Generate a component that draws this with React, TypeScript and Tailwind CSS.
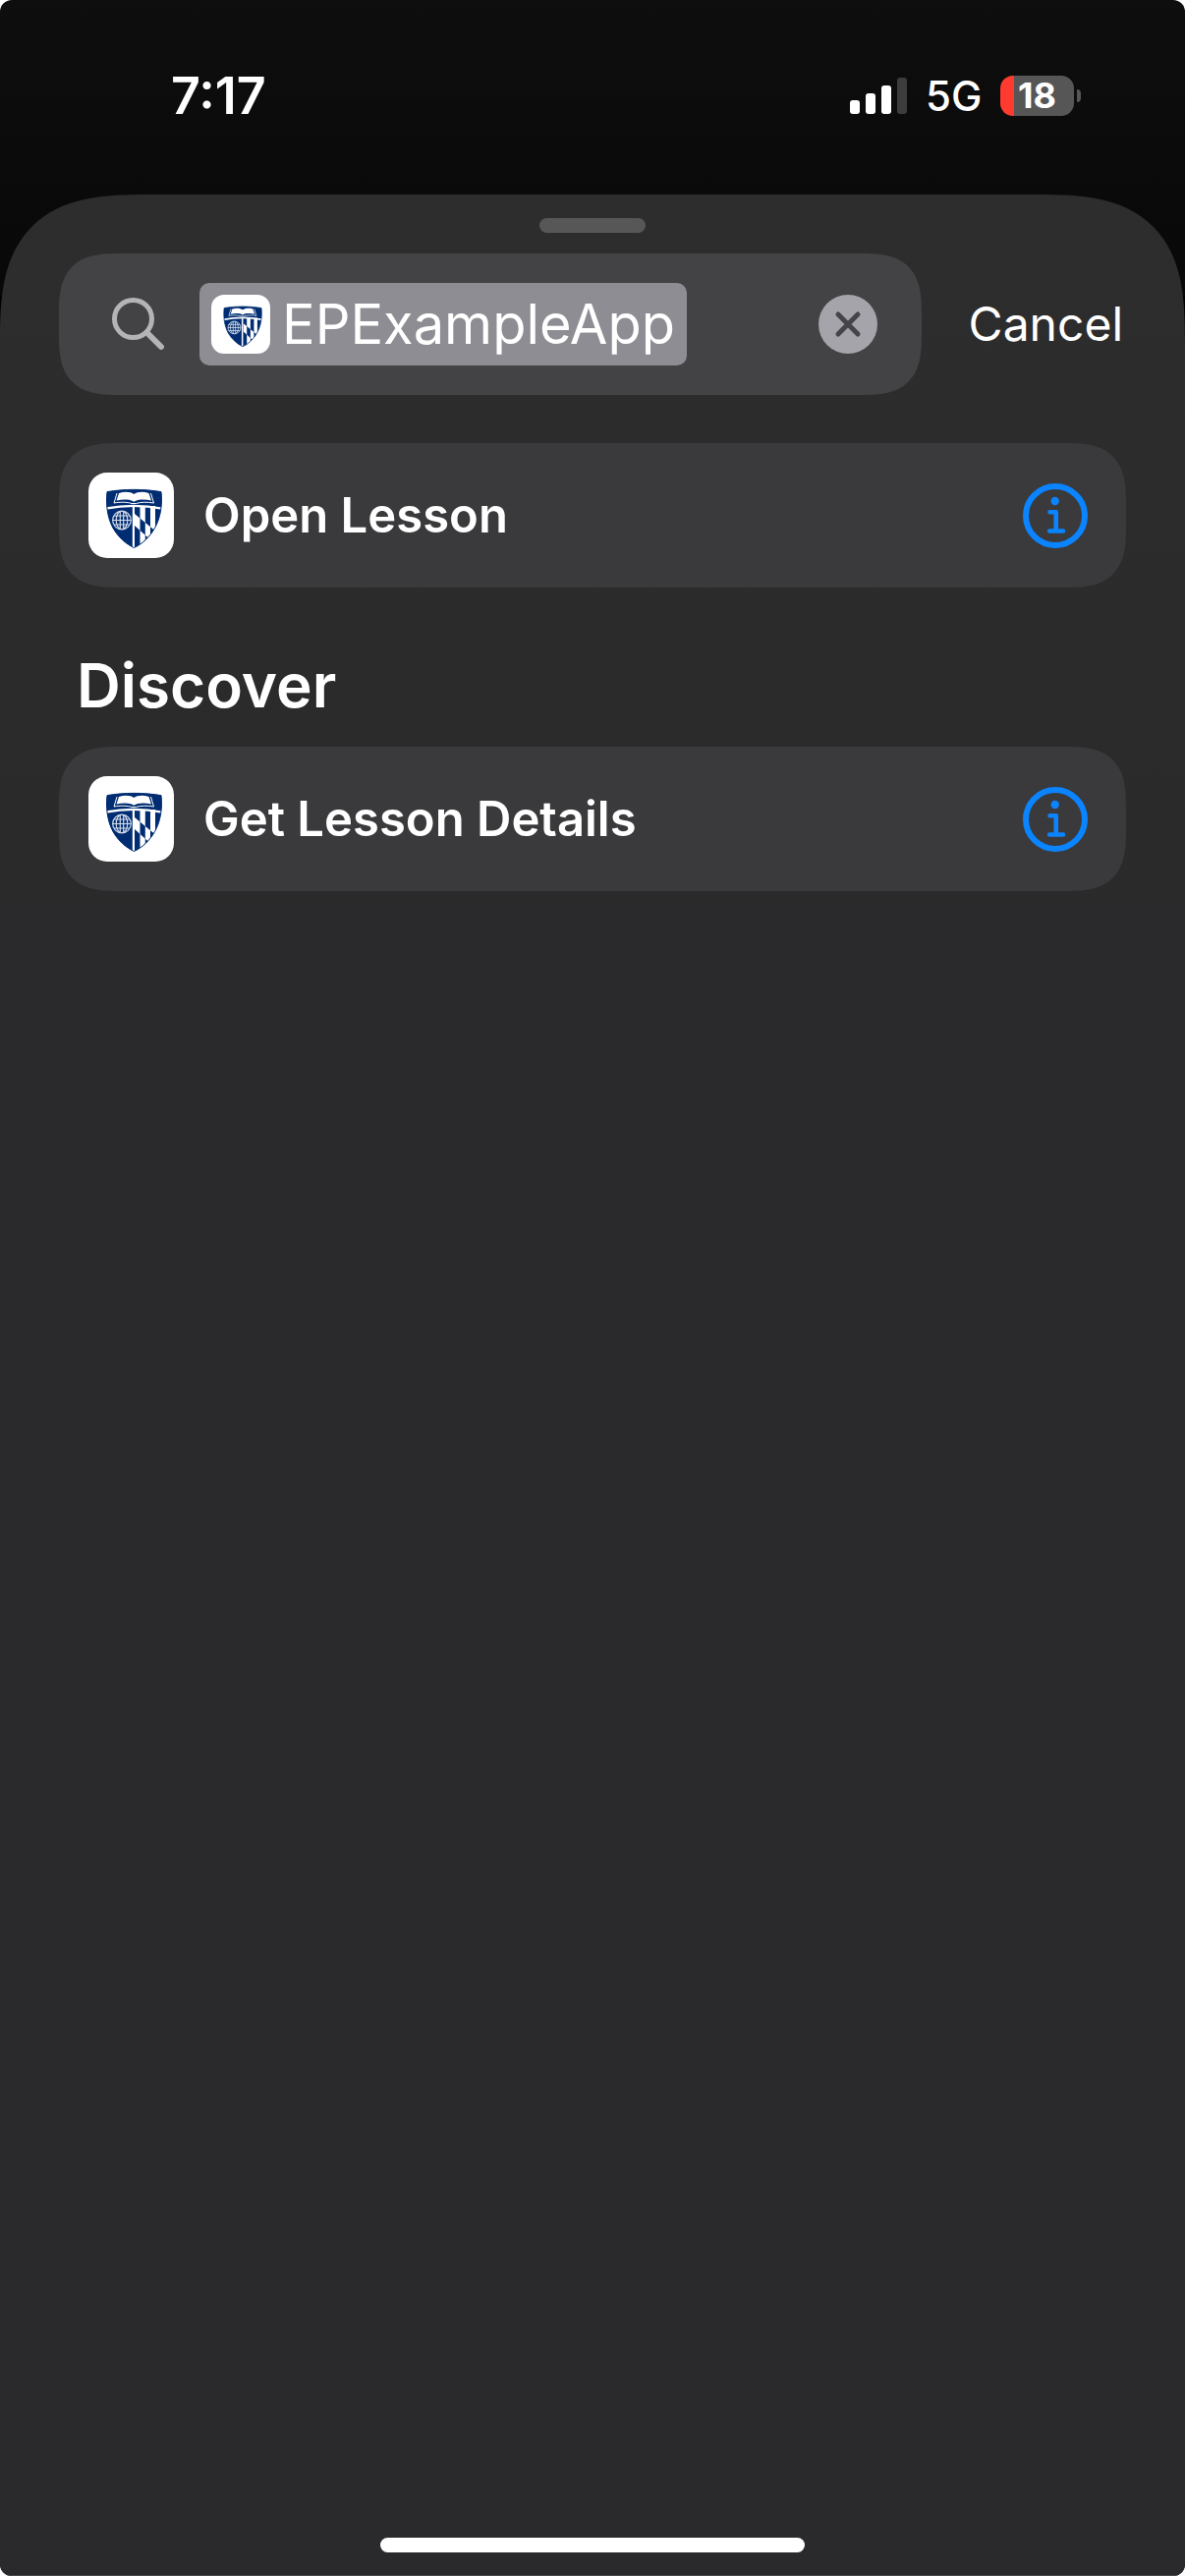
import React, { useId, useState } from "react";

const SHIELD =
  "M19 19.600C37 16.600 56 16.600 74 19.600C75.500 32 73.500 46 67.500 56.500C62 66 55 72.500 46.400 76.500C38 72.500 30.500 66 25 56.500C19.300 46 17.500 32 19 19.600Z";

function AppIcon({ className }: { className: string }) {
  const id = useId();
  const shield = `${id}-shield`;
  const bend = `${id}-bend`;
  const globe = `${id}-globe`;
  return (
    <svg viewBox="0 0 87 87" className={className} aria-hidden="true">
      <defs>
        <clipPath id={shield}>
          <path d={SHIELD} />
        </clipPath>
        <clipPath id={bend}>
          <path d="M47 42L76 66V80L47 54Z" />
        </clipPath>
        <clipPath id={globe}>
          <circle cx="34" cy="48.500" r="9.500" />
        </clipPath>
      </defs>
      <rect width="87" height="87" rx="19" fill="#fff" />
      <g clipPath={`url(#${shield})`}>
        <rect x="14" y="14" width="64" height="66" fill="#002d72" />
        <rect x="44.800" y="34" width="2.200" height="46" fill="#fff" />
        <path d="M52.500 34H57.800V80H52.500ZM63 34H68V80H63Z" fill="#fff" />
        <g clipPath={`url(#${bend})`}>
          <rect x="47" y="34" width="33" height="46" fill="#fff" />
          <path d="M52.500 34H57.800V80H52.500ZM63 34H68V80H63Z" fill="#002d72" />
        </g>
        <path d="M16 37C36 32.800 56 32.800 77 37" fill="none" stroke="#fff" strokeWidth="2.400" />
        <path d="M29 21L26 31C32 29.800 40 30 44 31.500H48.500C53 30 60 29.800 66.500 31L63.500 21" fill="none" stroke="#fff" strokeWidth="1" />
        <path d="M31 21C37 19 43 19.500 46.300 22C49.500 19.500 56 19 61.500 21L64 28.500C58 27 50 27 46.300 29.700C42.500 27 35 27 28.500 28.500Z" fill="#fff" />
      </g>
      <path d={SHIELD} fill="none" stroke="#002d72" strokeWidth="1" />
      <g fill="none" stroke="#d3dcea" strokeWidth="1.200">
        <circle cx="34" cy="48.500" r="9.300" />
        <g clipPath={`url(#${globe})`}>
          <ellipse cx="34" cy="48.500" rx="5.800" ry="9.300" />
          <path d="M32.300 39V58M35.700 39V58M24 44H44M24 48.500H44M24 53H44" />
        </g>
      </g>
    </svg>
  );
}

function InfoIcon() {
  return (
    <svg viewBox="0 0 66 66" className="size-[66px]" fill="none" stroke="#0a84ff" aria-hidden="true">
      <circle cx="33" cy="33" r="30" strokeWidth="6" />
      <circle cx="32.700" cy="18" r="4.200" fill="#0a84ff" stroke="none" />
      <path d="M27.500 29.300H33.700V48.500M27.200 48.500H41" strokeWidth="4.600" strokeLinecap="round" strokeLinejoin="round" />
    </svg>
  );
}

function ActionRow({ label }: { label: string }) {
  return (
    <li className="flex h-[147px] items-center rounded-[44px] bg-[#3a3a3c] pr-[39px] pl-[30px] supports-[corner-shape:squircle]:rounded-[62px] supports-[corner-shape:squircle]:[corner-shape:superellipse(1.5)]">
      <AppIcon className="size-[87px]" />
      <span className="ml-[30px] flex-1 text-[49px] font-semibold">{label}</span>
      <button type="button" aria-label={`About ${label}`}>
        <InfoIcon />
      </button>
    </li>
  );
}

function StatusBar() {
  return (
    <header className="flex h-[198px] items-start justify-between pt-[65px] pr-[106px] pl-[174px]">
      <time className="text-[52px] leading-[66px] font-semibold">7:17</time>
      <div className="flex h-16 items-center">
        <div className="flex items-end gap-[6px] pt-px" role="img" aria-label="Signal strength">
          <span className="h-[14px] w-[10px] rounded-[3px] bg-white" />
          <span className="h-[21px] w-[10px] rounded-[3px] bg-white" />
          <span className="h-[29px] w-[10px] rounded-[3px] bg-white" />
          <span className="h-[37px] w-[10px] rounded-[3px] bg-[#3c3c3c]" />
        </div>
        <span className="ml-[19px] w-[76px] text-[42px] font-medium">5G</span>
        <div className="flex h-[41px] w-[75px] items-center justify-center rounded-[13px] bg-[linear-gradient(90deg,#ff3b30_14px,#565656_14px)] text-[36px] font-bold">
          18
        </div>
        <span className="ml-[3px] h-[13px] w-[4px] rounded-r-full bg-[#565656]" />
      </div>
    </header>
  );
}

function SearchBar() {
  const [query, setQuery] = useState("EPExampleApp");
  return (
    <form role="search" className="mt-[21px] flex items-center justify-between pr-[3px]">
      <div className="mr-12 flex h-[144px] flex-1 items-center rounded-[44px] bg-[#434346] pr-[45px] pl-[54px] supports-[corner-shape:squircle]:rounded-[62px] supports-[corner-shape:squircle]:[corner-shape:superellipse(1.5)]">
        <svg viewBox="0 0 54 54" className="size-[54px] shrink-0" fill="none" stroke="#b4b4b7" strokeWidth="5" strokeLinecap="round" aria-hidden="true">
          <circle cx="21.500" cy="21.500" r="19" />
          <path d="M35.500 35.500L50 50" strokeWidth="6" />
        </svg>
        <label className="ml-[35px] flex h-[84px] items-center rounded-[10px] bg-[#8e8d93] px-3">
          <AppIcon className="size-[60px] shrink-0" />
          <input
            type="text"
            aria-label="Search apps and actions"
            value={query}
            onChange={(event) => setQuery(event.target.value)}
            className="ml-3 h-[84px] bg-transparent text-[56px] outline-none [field-sizing:content]"
          />
        </label>
        <button type="button" aria-label="Clear search" onClick={() => setQuery("")} className="ml-auto">
          <svg viewBox="0 0 60 60" className="size-[60px]" aria-hidden="true">
            <circle cx="30" cy="30" r="30" fill="#a5a4aa" />
            <path d="M20 20L40 40M40 20L20 40" stroke="#454549" strokeWidth="5" strokeLinecap="round" />
          </svg>
        </button>
      </div>
      <button type="button" className="text-[48px]">
        Cancel
      </button>
    </form>
  );
}

export default function App() {
  return (
    <div className="min-h-screen bg-white font-['Inter',sans-serif] text-white">
      <div className="flex min-h-screen flex-col overflow-hidden rounded-[12px] bg-[linear-gradient(#0e0e0e,#0a0a0a_198px,#080808_300px,#000_301px)]">
        <StatusBar />
        <main className="flex flex-1 flex-col rounded-t-[112px] border-b border-[#4a4a4c] bg-[linear-gradient(#2d2d2d,#2b2b2b_500px,#2a2a2c_800px)] px-[60px] pb-[23px] supports-[corner-shape:squircle]:rounded-t-[150px] supports-[corner-shape:squircle]:[corner-shape:superellipse(1.5)]">
          <div className="mx-auto mt-6 h-[15px] w-[108px] rounded-full bg-[#575757]" />
          <SearchBar />
          <ul className="mt-[49px]">
            <ActionRow label="Open Lesson" />
          </ul>
          <h2 className="mt-[60px] pl-[18px] text-[62px] leading-[80px] font-semibold">Discover</h2>
          <ul className="mt-[22px]">
            <ActionRow label="Get Lesson Details" />
          </ul>
          <div className="mx-auto mt-auto h-[15px] w-[432px] rounded-full bg-white" />
        </main>
      </div>
    </div>
  );
}
